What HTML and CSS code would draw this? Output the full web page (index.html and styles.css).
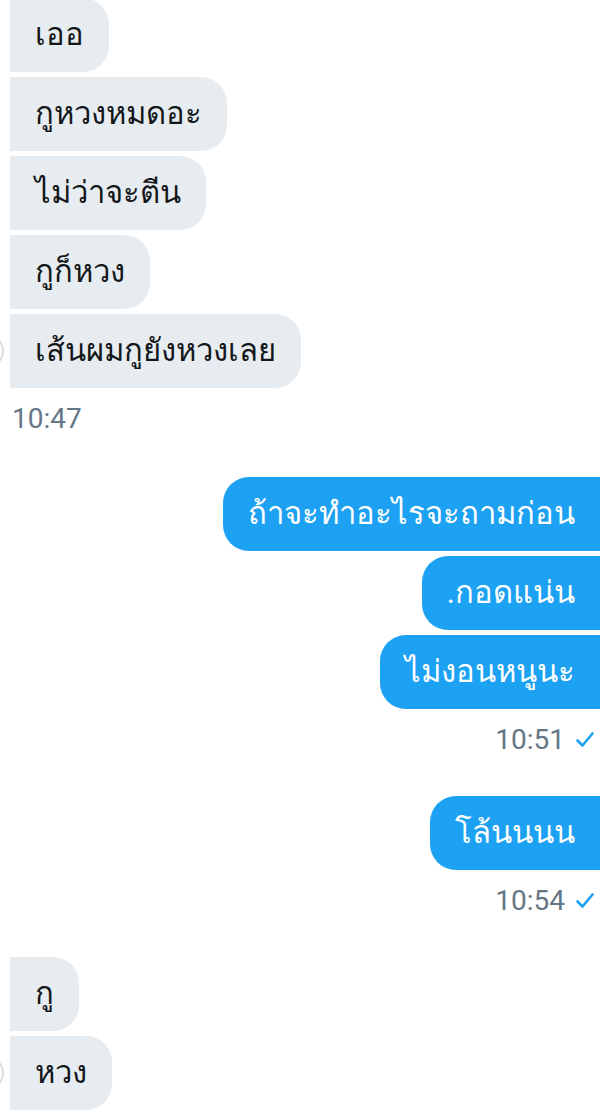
FILE: index.html
```html
<!DOCTYPE html>
<html lang="th">
<head>
<meta charset="utf-8">
<link rel="stylesheet" href="styles.css">
</head>
<body>
<div class="chat">
  <div class="group in first">
    <div class="row"><div class="bubble">เออ</div></div>
    <div class="row"><div class="bubble">กูหวงหมดอะ</div></div>
    <div class="row"><div class="bubble">ไม่ว่าจะตีน</div></div>
    <div class="row"><div class="bubble">กูก็หวง</div></div>
    <div class="row"><span class="avatar"></span><div class="bubble">เส้นผมกูยังหวงเลย</div></div>
    <div class="time">10:47</div>
  </div>
  <div class="group out">
    <div class="row"><div class="bubble">ถ้าจะทำอะไรจะถามก่อน</div></div>
    <div class="row"><div class="bubble">.กอดแน่น</div></div>
    <div class="row"><div class="bubble">ไม่งอนหนูนะ</div></div>
    <div class="time">10:51 <svg class="check" viewBox="0 0 20 20" width="20" height="20"><path d="M2.5 10.5 L7.5 15.5 L17.5 3.5" fill="none" stroke="#1da1f2" stroke-width="2.6" stroke-linecap="round" stroke-linejoin="round"/></svg></div>
  </div>
  <div class="group out">
    <div class="row"><div class="bubble">โล้นนนน</div></div>
    <div class="time">10:54 <svg class="check" viewBox="0 0 20 20" width="20" height="20"><path d="M2.5 10.5 L7.5 15.5 L17.5 3.5" fill="none" stroke="#1da1f2" stroke-width="2.6" stroke-linecap="round" stroke-linejoin="round"/></svg></div>
  </div>
  <div class="group in">
    <div class="row"><div class="bubble">กู</div></div>
    <div class="row"><span class="avatar"></span><div class="bubble">หวง</div></div>
  </div>
</div>
</body>
</html>
```
FILE: styles.css
```css
html, body {
  margin: 0;
  padding: 0;
  background: #ffffff;
}
body {
  width: 612px;
  height: 1118px;
  overflow: hidden;
  font-family: Roboto, "Noto Sans", sans-serif;
}
.chat {
  margin-top: -2px;
  padding: 0 12px 0 10px;
  display: flex;
  flex-direction: column;
}
.group {
  display: flex;
  flex-direction: column;
  gap: 5px;
  margin-bottom: 36px;
}
.group.first {
  margin-bottom: 38px;
}
.group.out {
  align-items: flex-end;
}
.group.in {
  align-items: flex-start;
}
.row {
  position: relative;
  display: flex;
}
.bubble {
  font-size: 31px;
  line-height: 40px;
  padding: 17px 25px;
  box-sizing: border-box;
  height: 74px;
  white-space: nowrap;
}
.in .bubble {
  background: #e6ecf0;
  color: #14171a;
  border-radius: 0 26px 26px 0;
}
.out .bubble {
  background: #1da1f2;
  color: #ffffff;
  border-radius: 26px 0 0 26px;
}
.avatar {
  position: absolute;
  left: -40px;
  top: 20px;
  width: 34px;
  height: 34px;
  border-radius: 50%;
  border: 2px solid #d8dde1;
  box-sizing: border-box;
}
.time {
  margin-top: 6px;
  height: 40px;
  line-height: 40px;
  font-size: 28px;
  color: #657786;
  display: flex;
  align-items: center;
  gap: 10px;
}
.in .time {
  padding-left: 2px;
}
.out .time {
  padding-right: 5px;
}
.check {
  display: block;
}
```
